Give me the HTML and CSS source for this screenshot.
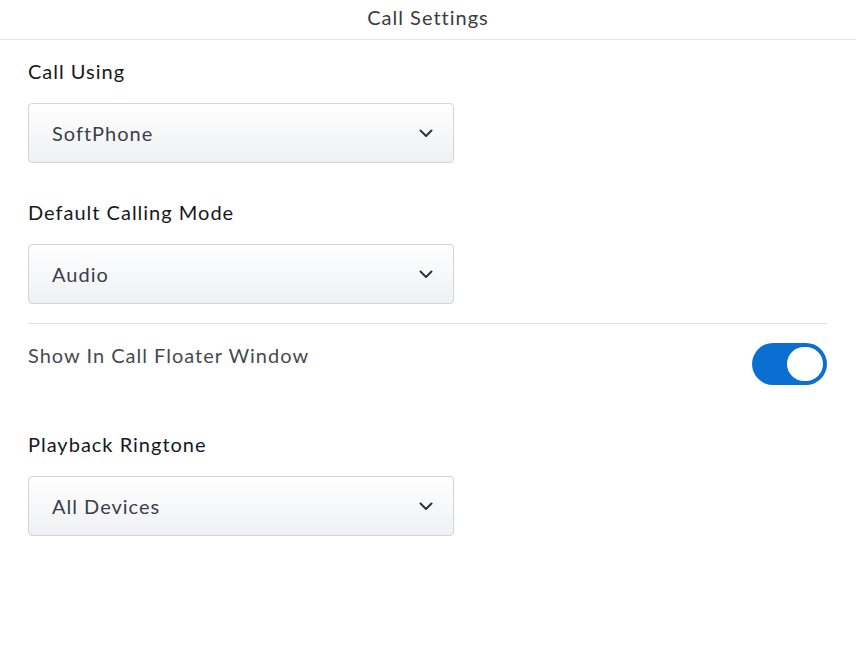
FILE: index.html
```html
<!DOCTYPE html>
<html>
<head>
<meta charset="utf-8">
<link rel="stylesheet" href="styles.css">
</head>
<body>
<div class="page">
  <header class="header">Call Settings</header>
  <main class="content">
    <section class="field">
      <div class="label">Call Using</div>
      <div class="select"><span>SoftPhone</span><svg class="chev" width="14" height="9" viewBox="0 0 14 9"><path d="M1.5 1.5 L7 7 L12.5 1.5" fill="none" stroke="#2d333d" stroke-width="2" stroke-linecap="round" stroke-linejoin="round"/></svg></div>
    </section>
    <section class="field">
      <div class="label">Default Calling Mode</div>
      <div class="select"><span>Audio</span><svg class="chev" width="14" height="9" viewBox="0 0 14 9"><path d="M1.5 1.5 L7 7 L12.5 1.5" fill="none" stroke="#2d333d" stroke-width="2" stroke-linecap="round" stroke-linejoin="round"/></svg></div>
    </section>
    <div class="divider"></div>
    <section class="toggle-row">
      <div class="toggle-label">Show In Call Floater Window</div>
      <div class="toggle"><div class="knob"></div></div>
    </section>
    <section class="field field-last">
      <div class="label">Playback Ringtone</div>
      <div class="select"><span>All Devices</span><svg class="chev" width="14" height="9" viewBox="0 0 14 9"><path d="M1.5 1.5 L7 7 L12.5 1.5" fill="none" stroke="#2d333d" stroke-width="2" stroke-linecap="round" stroke-linejoin="round"/></svg></div>
    </section>
  </main>
</div>
</body>
</html>
```
FILE: styles.css
```css
html, body {
  margin: 0;
  padding: 0;
  background: #ffffff;
}
body {
  font-family: Lato, "Open Sans", "Liberation Sans", sans-serif;
  color: #16181d;
  letter-spacing: 1px;
}
.page {
  width: 856px;
}
.header {
  height: 40px;
  border-bottom: 1px solid #e6e6e6;
  display: flex;
  align-items: center;
  justify-content: center;
  font-size: 20px;
  color: #3a3d42;
  box-sizing: border-box;
  padding-bottom: 5px;
}
.content {
  padding: 0 29px 0 28px;
}
.field {
  display: flex;
  flex-direction: column;
}
.label {
  font-size: 20px;
  height: 24px;
  line-height: 24px;
  margin-top: 19px;
  margin-bottom: 20px;
}
.field + .field .label {
  margin-top: 37px;
}
.field-last .label {
  margin-top: 15px;
}
.select {
  width: 426px;
  height: 60px;
  box-sizing: border-box;
  border: 1px solid #d2d4d8;
  border-radius: 4px;
  background: linear-gradient(#ffffff, #eff0f3);
  display: flex;
  align-items: center;
  justify-content: space-between;
  padding: 0 20px 0 23px;
  font-size: 20px;
  color: #3a3f48;
}
.chev {
  display: block;
}
.divider {
  height: 1px;
  background: #e3e3e3;
  margin-top: 19px;
}
.toggle-row {
  display: flex;
  justify-content: space-between;
  align-items: flex-start;
  padding-top: 19px;
  margin-bottom: 32px;
}
.toggle-label {
  font-size: 20px;
  line-height: 24px;
  color: #464a50;
}
.toggle {
  width: 75px;
  height: 42px;
  border-radius: 21px;
  background: #0a6fd1;
  box-sizing: border-box;
  padding: 4px;
  display: flex;
  justify-content: flex-end;
  margin-top: 0;
}
.knob {
  width: 36px;
  height: 34px;
  border-radius: 17px;
  background: #ffffff;
}
```
